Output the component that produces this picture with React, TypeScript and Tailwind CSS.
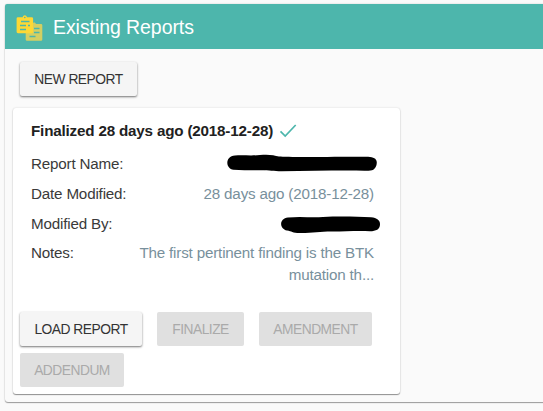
import type { ReactNode } from "react";

function ReportsIcon() {
  return (
    <svg width="28" height="28" viewBox="0 0 28 28" className="mt-[4px] shrink-0">
      <path
        fill="#d3cf62"
        d="M11 9h5.500c.3-1 .9-1.500 1.700-1.500s1.400.5 1.700 1.500H25a1.300 1.300 0 0 1 1.300 1.300v14.200a1.300 1.300 0 0 1-1.300 1.300H11a1.300 1.300 0 0 1-1.300-1.300V10.300A1.300 1.300 0 0 1 11 9Z"
      />
      <path stroke="#4db6ac" strokeWidth="1.300" d="M18 13.500h5.500M18 17.500h5.500M13.500 21.500h6" />
      <path
        fill="#fdd835"
        d="M2 2.200h4.700C7 1 7.800.3 8.800.3s1.800.7 2.100 1.900h4.800A1.400 1.400 0 0 1 17.100 3.600v13.200a1.400 1.400 0 0 1-1.400 1.400H2a1.400 1.400 0 0 1-1.400-1.400V3.600A1.400 1.400 0 0 1 2 2.200Z"
      />
      <circle cx="8.800" cy="2.500" r=".8" fill="#4db6ac" />
      <path stroke="#4db6ac" strokeWidth="1.400" d="M5 6.500h8.500M4 10.500h6M12 10.500h2M4 14.500h6" />
    </svg>
  );
}

function Button({ children, className, disabled = false }: { children: ReactNode; className: string; disabled?: boolean }) {
  return (
    <button
      disabled={disabled}
      className={`flex shrink-0 items-center justify-center whitespace-nowrap rounded-[2px] pt-[2px] text-[13.800px] tracking-[-0.5px] ${
        disabled
          ? "bg-[#e0e0e0] text-[#aaaaaa]"
          : "bg-[#f5f5f5] text-[#333333] shadow-[0_1px_2px_rgba(0,0,0,0.45),0_1px_3px_rgba(0,0,0,0.12)]"
      } ${className}`}
    >
      {children}
    </button>
  );
}

function Row({ label, children }: { label: string; children: ReactNode }) {
  return (
    <div className="flex min-h-[29.800px] items-start justify-between leading-[22px]">
      <span className="text-[#3a3a3a]">{label}</span>
      <span className="text-right text-[#78909c]">{children}</span>
    </div>
  );
}

export default function App() {
  return (
    <div className="h-[411px] w-[543px] overflow-hidden bg-[#fafafa] pl-[5px] pt-[4px] font-['Liberation_Sans',Arial,sans-serif]">
      <section className="h-[398px] w-[560px] rounded-[3px] bg-[#fafafa] shadow-[0_1px_1px_rgba(0,0,0,0.35),0_0_2px_rgba(0,0,0,0.18)]">
        <header className="flex h-[45px] items-center gap-[9px] rounded-t-[2px] bg-[#4db6ac] pl-[11px] pt-px text-white">
          <ReportsIcon />
          <h1 className="pt-px text-[19.500px] tracking-[-0.07px]">Existing Reports</h1>
        </header>
        <div className="pl-[8px] pt-[13px]">
          <div className="pl-[7px]">
            <Button className="h-[34px] w-[117px]">NEW REPORT</Button>
          </div>
          <article className="mt-[12px] h-[286px] w-[387px] rounded-[3px] bg-white pt-[12px] shadow-[0_1px_1px_rgba(0,0,0,0.4),0_0_2px_rgba(0,0,0,0.16)]">
            <div className="h-[192px] pl-[18px] pr-[26px] text-[15.200px] tracking-[-0.18px]">
              <h2 className="flex h-[33px] items-start whitespace-nowrap font-bold leading-[22px] text-[#212121]">
                Finalized 28 days ago (2018-12-28)
                <svg width="18" height="14" viewBox="0 0 18 14" className="ml-[6px] mt-[4px]" fill="none">
                  <path d="M1.500 7.300 6.200 12 16.700 1" stroke="#4db6ac" strokeWidth="1.700" />
                </svg>
              </h2>
              <Row label="Report Name:">
                <svg width="152" height="22" viewBox="0 0 152 22" className="-mr-[4px]">
                  <path
                    d="M9 2.500C18 2 26 3 34 2c8-.9 14 0 19 1.600 10 1 75 0 91 .3 6 .6 7.500 3.600 6.500 8-1.500 5-4 6-12 5.800-30-.5-55 .6-83 .6-8 0-12-1-20-1-12-.4-20 .2-28-.5C-.5 15.500-1.500 3.500 9 2.500Z"
                    fill="#000"
                  />
                </svg>
              </Row>
              <Row label="Date Modified:">28 days ago (2018-12-28)</Row>
              <Row label="Modified By:">
                <svg width="101" height="22" viewBox="0 -1 101 22" className="-mr-[7px]">
                  <path
                    d="M8 3.500c13-1.500 22 .3 35-.6 16-.8 34-.4 48 .3 6 .5 9 3 9 7 0 5-4 7-10 7-14-.5-25 .3-37 .3-12-.2-20 1.700-33 1.600-8 0-8-2-13-2.600C-1 14.500-1 4.500 8 3.500Z"
                    fill="#000"
                  />
                </svg>
              </Row>
              <Row label="Notes:">
                The first pertinent finding is the BTK
                <br />
                mutation th...
              </Row>
            </div>
            <div className="flex flex-wrap gap-x-[15px] gap-y-[7px] pl-[7px]">
              <Button className="h-[34px] w-[122px]">LOAD REPORT</Button>
              <Button className="h-[34px] w-[87px]" disabled>FINALIZE</Button>
              <Button className="h-[34px] w-[113px]" disabled>AMENDMENT</Button>
              <Button className="h-[34px] w-[104px]" disabled>ADDENDUM</Button>
            </div>
          </article>
        </div>
      </section>
    </div>
  );
}
